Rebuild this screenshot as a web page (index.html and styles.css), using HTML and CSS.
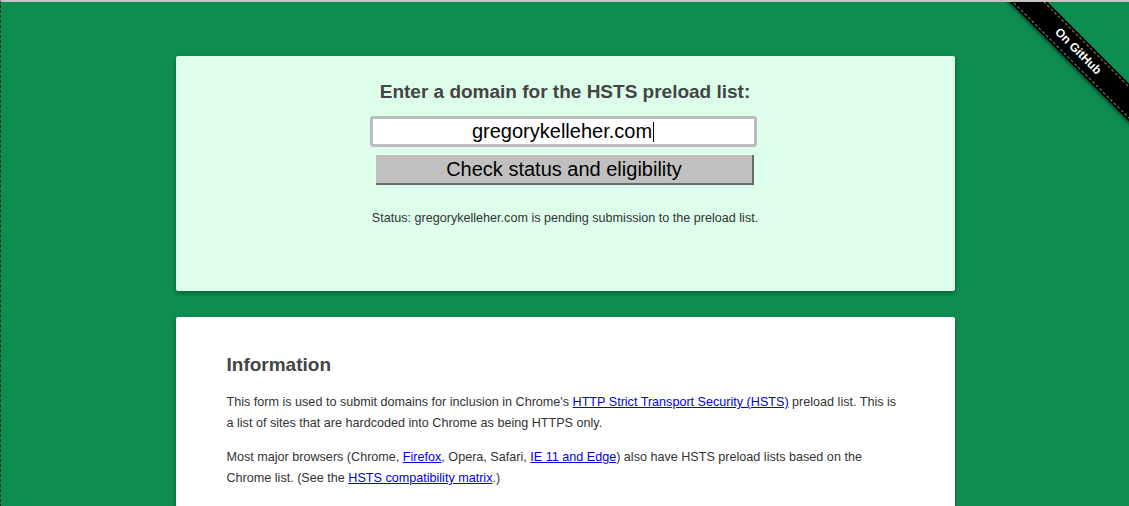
FILE: index.html
```html
<!DOCTYPE html>
<html lang="en">
<head>
<meta charset="utf-8">
<title>HSTS Preload List Submission</title>
<link rel="stylesheet" href="styles.css">
</head>
<body>
<div class="page">
  <div class="ribbon-wrap">
    <a class="ribbon" href="#"><span class="ribbon-text">On GitHub</span></a>
  </div>
  <section class="card form-card">
    <h1 class="prompt">Enter a domain for the HSTS preload list:</h1>
    <form class="domain-form">
      <div class="domain-input">gregorykelleher.com<span class="caret"></span></div>
      <button type="button" class="check-btn">Check status and eligibility</button>
    </form>
    <p class="status">Status: gregorykelleher.com is pending submission to the preload list.</p>
  </section>
  <section class="card info-card">
    <h2 class="info-title">Information</h2>
    <p class="info-text">This form is used to submit domains for inclusion in Chrome's <a href="#">HTTP Strict Transport Security (HSTS)</a> preload list. This is a list of sites that are hardcoded into Chrome as being HTTPS only.</p>
    <p class="info-text">Most major browsers (Chrome, <a href="#">Firefox</a>, Opera, Safari, <a href="#">IE 11 and Edge</a>) also have HSTS preload lists based on the Chrome list. (See the <a href="#">HSTS compatibility matrix</a>.)</p>
  </section>
</div>
</body>
</html>
```

FILE: styles.css
```css
* { box-sizing: border-box; }
html, body { margin: 0; padding: 0; }
body {
  font-family: "Liberation Sans", Arial, sans-serif;
  background: rgb(14, 141, 80);
}
.page {
  position: relative;
  overflow: hidden;
  min-height: 100vh;
  border-top: 2px solid #c4c4c4;
  border-left: 1px dashed #1d2a2c;
  background: rgb(14, 141, 80);
  padding-top: 54px;
  padding-bottom: 40px;
}
.card {
  width: 779px;
  margin: 0 auto;
  border-radius: 2px;
  box-shadow: 0 2px 4px rgba(0, 0, 0, 0.35);
}
.form-card {
  background: #dcfeeb;
  padding: 24px 0 65px;
  text-align: center;
}
.prompt {
  margin: 0;
  font-size: 19px;
  line-height: 23px;
  font-weight: bold;
  color: #444;
}
.domain-form {
  display: flex;
  flex-direction: column;
  align-items: center;
  margin-top: 13px;
}
.domain-input {
  width: 387px;
  height: 31px;
  margin-left: -4px;
  border: 3px solid #bcbcbc;
  border-radius: 3px;
  background: #fff;
  font-size: 20px;
  line-height: 25px;
  color: #000;
  text-align: center;
  display: flex;
  align-items: center;
  justify-content: center;
}
.caret {
  display: inline-block;
  width: 1px;
  height: 20px;
  background: #000;
  margin-left: 1px;
}
.check-btn {
  margin-top: 8px;
  width: 378px;
  height: 30px;
  padding: 0;
  background: #c0c0c0;
  border: none;
  border-right: 2px solid #6a6a6a;
  border-bottom: 2px solid #6a6a6a;
  border-radius: 0;
  font-family: "Liberation Sans", Arial, sans-serif;
  font-size: 20px;
  color: #000;
}
.status {
  margin: 26px 0 0;
  font-size: 12.6px;
  line-height: 15px;
  color: #333;
}
.info-card {
  margin-top: 26px;
  background: #fff;
  padding: 36px 51px 30px;
}
.info-title {
  margin: 0 0 16px;
  font-size: 19px;
  line-height: 23px;
  font-weight: bold;
  color: #444;
}
.info-text {
  margin: 0 0 13px;
  font-size: 12.6px;
  line-height: 21px;
  color: #333;
}
.info-text a { color: #0000ee; }
.ribbon-wrap {
  position: absolute;
  top: 0;
  right: 0;
  width: 150px;
  height: 150px;
  overflow: hidden;
}
.ribbon {
  position: absolute;
  left: -1px;
  top: 36px;
  width: 200px;
  height: 27px;
  background: #000;
  padding: 2px 0;
  transform: rotate(45deg);
  box-shadow: 0 2px 3px rgba(0, 0, 0, 0.4);
  text-decoration: none;
  display: block;
}
.ribbon-text {
  display: block;
  height: 23px;
  border-top: 1px dashed rgba(255, 255, 255, 0.5);
  border-bottom: 1px dashed rgba(255, 255, 255, 0.5);
  color: #fff;
  font-weight: bold;
  font-size: 12px;
  line-height: 21px;
  text-align: center;
  text-shadow: 0 0 2px rgba(0, 0, 0, 0.8);
}
```
